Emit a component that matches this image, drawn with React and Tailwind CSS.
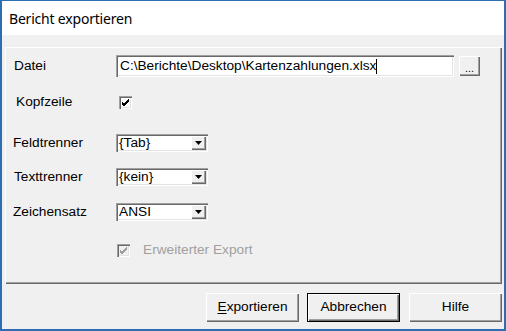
import React from "react";

const sunken =
  "shadow-[inset_1px_1px_0_#a0a0a0,inset_2px_2px_0_#696969,inset_-1px_-1px_0_#ffffff,inset_-2px_-2px_0_#e3e3e3]";
const raised =
  "shadow-[inset_1px_1px_0_#ffffff,inset_-1px_-1px_0_#696969,inset_-2px_-2px_0_#a0a0a0]";

function Check({ disabled }) {
  return (
    <div
      className={`w-[13px] h-[13px] ${disabled ? "bg-[#f0f0f0]" : "bg-white"} ${sunken} flex items-center justify-center`}
    >
      <svg width="9" height="9" viewBox="0 0 9 9">
        <path
          d="M1 4 L3 6 L8 1 M1 5 L3 7 L8 2 M1 6 L3 8 L8 3"
          stroke={disabled ? "#a0a0a0" : "#000"}
          strokeWidth="1"
          fill="none"
          shapeRendering="crispEdges"
        />
      </svg>
    </div>
  );
}

function Combo({ value }) {
  return (
    <div className={`w-[92px] h-[18px] bg-white ${sunken} flex items-center pl-[3px] pr-[2px]`}>
      <span className="flex-1 leading-none">{value}</span>
      <div className={`w-[15px] h-[14px] bg-[#f0f0f0] ${raised} flex items-center justify-center`}>
        <svg width="7" height="4" viewBox="0 0 7 4">
          <path d="M0 0 H7 L3.5 4 Z" fill="#000" />
        </svg>
      </div>
    </div>
  );
}

function Row({ label, labelPad = "pl-[9px]", h, children }) {
  return (
    <div className={`flex items-center ${h}`}>
      <div className={`w-[111px] ${labelPad}`}>{label}</div>
      {children}
    </div>
  );
}

export default function App() {
  return (
    <div
      className="w-[506px] h-[331px] bg-[#2f6db3] pt-[1px] px-[2px] pb-[2px] flex flex-col text-black"
      style={{ fontFamily: '"Liberation Sans", Arial, sans-serif' }}
    >
      <div
        className="h-[34px] bg-white flex items-center pl-[7px] text-[14px] tracking-[-0.2px]"
        style={{ fontFamily: '"Noto Sans", "Open Sans", sans-serif' }}
      >
        Bericht exportieren
      </div>
      <div className="flex-1 bg-[#f0f0f0] flex flex-col pt-[12px] pl-[3px] pr-[2px] text-[13.7px]">
        <div className="h-[237px] shadow-[inset_1px_1px_0_#ffffff,inset_-1px_-1px_0_#696969,inset_-2px_-2px_0_#a0a0a0] pt-[8px] flex flex-col">
          <Row label="Datei" h="h-[22px]">
            <div className={`w-[338px] h-[22px] bg-white ${sunken} flex items-center pl-[4px]`}>
              <span>C:\Berichte\Desktop\Kartenzahlungen.xlsx</span>
              <span className="w-[1px] h-[15px] bg-black" />
            </div>
            <div
              className={`ml-[5px] w-[21px] h-[20px] bg-[#f0f0f0] ${raised} flex items-end justify-center pb-[2px] text-[11px] leading-none`}
            >
              ...
            </div>
          </Row>
          <div className="h-[14px]" />
          <Row label="Kopfzeile" labelPad="pl-[11px]" h="h-[22px]">
            <div className="pl-[3px]">
              <Check />
            </div>
          </Row>
          <div className="h-[21px]" />
          <Row label="Feldtrenner" labelPad="pl-[8px]" h="h-[18px]">
            <Combo value="{Tab}" />
          </Row>
          <div className="h-[16px]" />
          <Row label="Texttrenner" labelPad="pl-[9px]" h="h-[18px]">
            <Combo value="{kein}" />
          </Row>
          <div className="h-[17px]" />
          <Row label="Zeichensatz" labelPad="pl-[8px]" h="h-[18px]">
            <Combo value="ANSI" />
          </Row>
          <div className="h-[21px]" />
          <div className="flex items-center h-[16px] pl-[112px]">
            <Check disabled />
            <span className="ml-[13px] text-[#a0a0a0]">Erweiterter Export</span>
          </div>
        </div>
        <div className="flex justify-end pt-[9px]">
          <button
            className={`w-[93px] h-[29px] bg-[#f0f0f0] ${raised} flex items-center justify-center`}
          >
            <span>
              <span className="underline underline-offset-2">E</span>xportieren
            </span>
          </button>
          <button
            className={`ml-[8px] w-[93px] h-[29px] bg-[#f0f0f0] border border-black shadow-[inset_1px_1px_0_#ffffff,inset_-1px_-1px_0_#696969,inset_-2px_-2px_0_#a0a0a0] flex items-center justify-center`}
          >
            Abbrechen
          </button>
          <button
            className={`ml-[9px] w-[93px] h-[29px] bg-[#f0f0f0] ${raised} flex items-center justify-center`}
          >
            Hilfe
          </button>
        </div>
      </div>
    </div>
  );
}
